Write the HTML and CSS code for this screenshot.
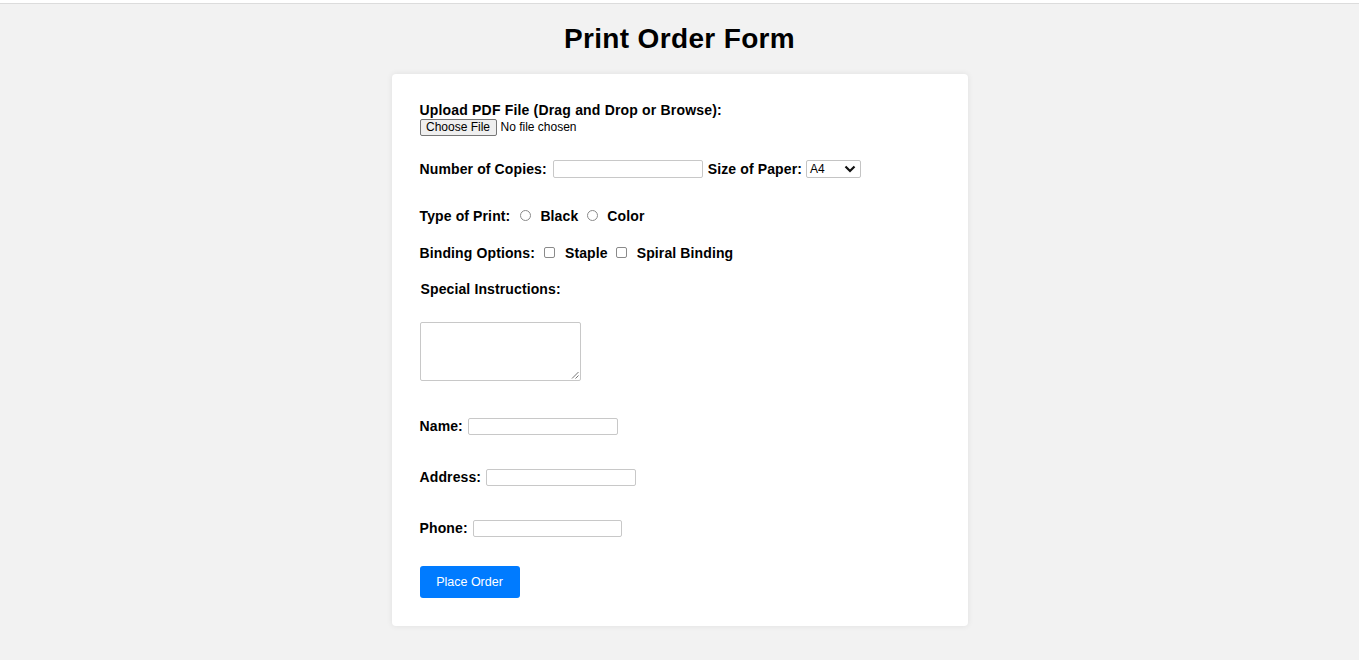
FILE: index.html
```html
<!DOCTYPE html>
<html>
<head>
<meta charset="utf-8">
<title>Print Order Form</title>
<link rel="stylesheet" href="styles.css">
</head>
<body>
<div class="topbar"></div>
<h1 class="title">Print Order Form</h1>
<form class="card">
  <div class="row-upload">
    <label class="lbl block upload">Upload PDF File (Drag and Drop or Browse):</label>
    <div class="file">
      <span class="file-btn">Choose File</span>
      <span class="file-text">No file chosen</span>
    </div>
  </div>

  <div class="row row-copies">
    <label class="lbl">Number of Copies:</label>
    <span class="input w150"></span>
    <label class="lbl">Size of Paper:</label>
    <span class="select">
      <span>A4</span>
      <svg width="12" height="8" viewBox="0 0 12 8"><path d="M1.5 1.5 L6 6 L10.5 1.5" fill="none" stroke="#111" stroke-width="2.2"/></svg>
    </span>
  </div>

  <div class="row row-type">
    <label class="lbl">Type of Print:</label>
    <span class="radio first"></span>
    <span class="lbl">Black</span>
    <span class="radio"></span>
    <span class="lbl">Color</span>
  </div>

  <div class="row row-bind">
    <label class="lbl">Binding Options:</label>
    <span class="check first"></span>
    <span class="lbl">Staple</span>
    <span class="check"></span>
    <span class="lbl">Spiral Binding</span>
  </div>

  <div class="row row-special">
    <label class="lbl special">Special Instructions:</label>
  </div>
  <div class="textarea">
    <svg class="grip" width="8" height="8" viewBox="0 0 8 8"><path d="M7.5 1 L1 7.5 M7.5 4.5 L4.5 7.5" stroke="#777" stroke-width="1"/></svg>
  </div>

  <div class="row row-name">
    <label class="lbl">Name:</label>
    <span class="input w150"></span>
  </div>
  <div class="row row-addr">
    <label class="lbl">Address:</label>
    <span class="input w150"></span>
  </div>
  <div class="row row-phone">
    <label class="lbl">Phone:</label>
    <span class="input w149"></span>
  </div>

  <button type="button" class="btn">Place Order</button>
</form>
</body>
</html>
```
FILE: styles.css
```css
html, body {
  margin: 0;
  padding: 0;
}
body {
  background: #f2f2f2;
  font-family: "Liberation Sans", Arial, sans-serif;
  color: #000;
  height: 660px;
  overflow: hidden;
}
.topbar {
  height: 3px;
  background: #fff;
  border-bottom: 1px solid #dcdcdc;
}
.title {
  margin: 0;
  padding-top: 19px;
  height: 51px;
  line-height: 32px;
  font-size: 28px;
  font-weight: bold;
  text-align: center;
  letter-spacing: 0.35px;
}
.card {
  box-sizing: border-box;
  width: 576px;
  margin: 0 auto;
  background: #fff;
  border-radius: 4px;
  box-shadow: 0 0 6px rgba(0,0,0,0.08);
  padding: 28px 28px 28px 28px;
}
.lbl {
  font-size: 14px;
  font-weight: bold;
  letter-spacing: 0.12px;
  line-height: 16px;
  white-space: nowrap;
}
.block { display: block; }
.upload { letter-spacing: 0.18px; }
.file {
  display: flex;
  align-items: center;
  margin-top: 1px;
  height: 17px;
}
.file-btn {
  box-sizing: border-box;
  height: 17px;
  width: 77px;
  border: 1px solid #767676;
  background: #efefef;
  border-radius: 2px;
  font-size: 12px;
  line-height: 15px;
  text-align: center;
  color: #000;
}
.file-text {
  font-size: 12px;
  margin-left: 4px;
  line-height: 15px;
}
.row {
  display: flex;
  align-items: center;
}
.row-copies { margin-top: 24px; height: 18px; }
.row-copies .input { margin: 0 5px 0 6px; height: 18px; }
.row-type { margin-top: 30px; height: 16px; }
.row-bind { margin-top: 21px; height: 16px; }
.row-special { margin-top: 20px; height: 16px; }
.special { margin-left: 1px; }
.input {
  box-sizing: border-box;
  display: inline-block;
  height: 17px;
  border: 1px solid #c8c8c8;
  border-radius: 2px;
  background: #fff;
}
.w150 { width: 150px; }
.w149 { width: 149px; }
.select {
  box-sizing: border-box;
  display: inline-flex;
  align-items: center;
  justify-content: space-between;
  width: 55px;
  height: 18px;
  margin-left: 4px;
  border: 1px solid #c4c4c4;
  border-radius: 2px;
  padding: 0 4px 0 3px;
  font-size: 12px;
}
.radio {
  box-sizing: border-box;
  display: inline-block;
  width: 11px;
  height: 11px;
  border: 1px solid #8a8a8a;
  border-radius: 50%;
  margin: 0 9px 1px 9px;
}
.radio.first { margin-left: 10px; }
.check {
  box-sizing: border-box;
  display: inline-block;
  width: 11px;
  height: 11px;
  border: 1px solid #8a8a8a;
  border-radius: 2px;
  margin: 0 10px 2px 8px;
}
.check.first { margin-left: 9px; }
.textarea {
  position: relative;
  box-sizing: border-box;
  margin-top: 25px;
  width: 161px;
  height: 59px;
  border: 1px solid #c8c8c8;
  border-radius: 2px;
}
.grip {
  position: absolute;
  right: 1px;
  bottom: 1px;
}
.row-name { margin-top: 37px; height: 17px; align-items: flex-start; }
.row-addr { margin-top: 34px; height: 17px; align-items: flex-start; }
.row-phone { margin-top: 34px; height: 17px; align-items: flex-start; }
.row-name .input, .row-addr .input, .row-phone .input { margin-left: 5px; }
.btn {
  display: block;
  margin-top: 29px;
  width: 100px;
  height: 32px;
  border: none;
  border-radius: 3px;
  background: #007bff;
  color: #fff;
  font-family: "Liberation Sans", Arial, sans-serif;
  font-size: 12.5px;
  padding: 0;
}
```
